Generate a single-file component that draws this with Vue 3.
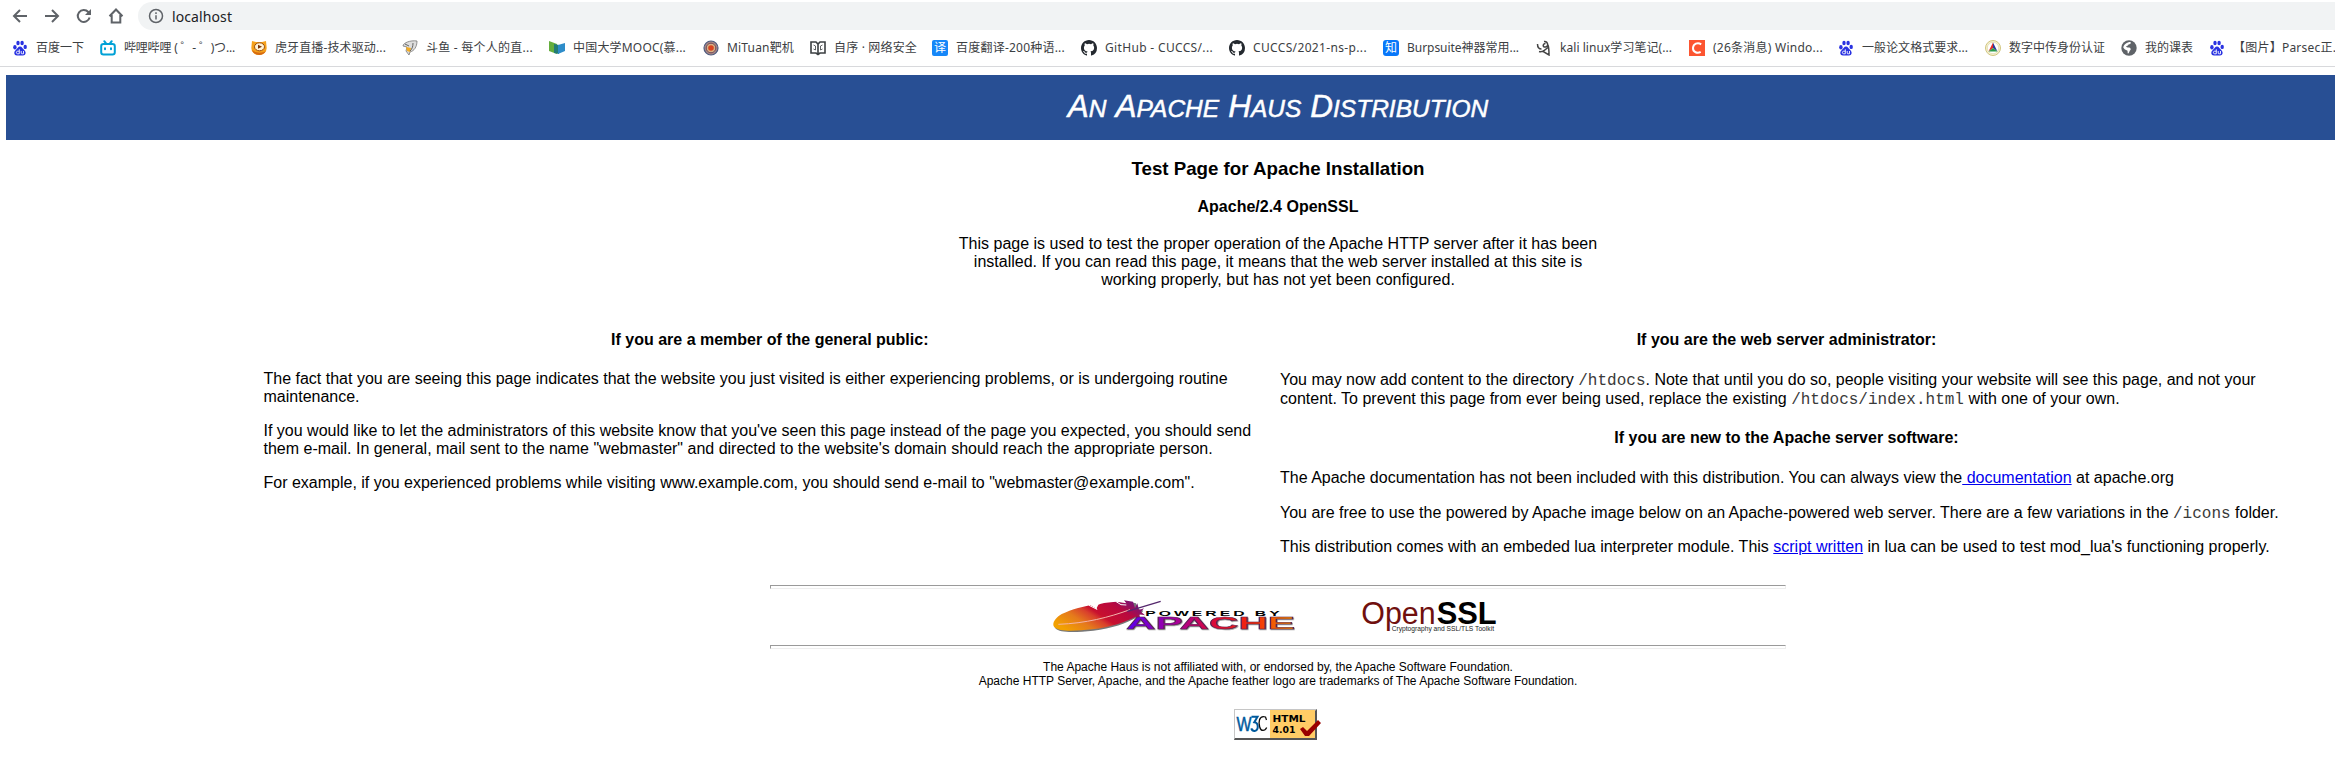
<script setup>
import { onMounted, ref } from 'vue'

const bookmarks = [
  { icon: 'baidu', text: '百度一下', cell: 88, width: 48 },
  { icon: 'bili', text: '哔哩哔哩 ( ゜- ゜)つ...', cell: 151, width: 111 },
  { icon: 'huya', text: '虎牙直播-技术驱动...', cell: 151, width: 111 },
  { icon: 'douyu', text: '斗鱼 - 每个人的直...', cell: 147, width: 107 },
  { icon: 'mooc', text: '中国大学MOOC(慕...', cell: 154, width: 113 },
  { icon: 'mituan', text: 'MiTuan靶机', cell: 107, width: 67 },
  { icon: 'book', text: '自序 · 网络安全', cell: 122, width: 83 },
  { icon: 'yi', text: '百度翻译-200种语...', cell: 149, width: 109 },
  { icon: 'github', text: 'GitHub - CUCCS/...', cell: 148, width: 108 },
  { icon: 'github', text: 'CUCCS/2021-ns-p...', cell: 154, width: 114 },
  { icon: 'zhi', text: 'Burpsuite神器常用...', cell: 153, width: 112 },
  { icon: 'kali', text: 'kali linux学习笔记(...', cell: 153, width: 112 },
  { icon: 'csdn', text: '(26条消息) Windo...', cell: 149, width: 110 },
  { icon: 'baidu', text: '一般论文格式要求...', cell: 147, width: 106 },
  { icon: 'auth', text: '数字中传身份认证', cell: 136, width: 96 },
  { icon: 'globe', text: '我的课表', cell: 88, width: 48 },
  { icon: 'baidu', text: '【图片】Parsec正...', cell: 150, width: 110 },
]
const titleWords = ['An', 'Apache', 'Haus', 'Distribution']

// Letter spacing that brings every label to its width
const labels = ref([])
const spacing = ref(bookmarks.map(() => 0))
onMounted(() => {
  spacing.value = labels.value.map((el, i) => {
    const natural = el.getBoundingClientRect().width
    return (bookmarks[i].width - natural) / [...bookmarks[i].text].length
  })
})
</script>

<template>
  <div class="window">
    <header class="chrome">
      <div class="toolbar">
        <svg class="nav" viewBox="0 0 16 16"><path d="M15 8H2M8 2L2 8l6 6" /></svg>
        <svg class="nav" viewBox="0 0 16 16"><path d="M1 8h13M8 2l6 6-6 6" /></svg>
        <svg class="nav" viewBox="0 0 16 16"><path d="M13.6 9.5A6 6 0 1 1 12.3 4L14 6" /><path class="solid" d="M15 1v6H9z" /></svg>
        <svg class="nav" viewBox="0 0 16 16"><path d="M1.5 8.3L8 1.5l6.500 6.800M3.700 7v7.500h8.600V7" /></svg>
        <div class="address">
          <svg class="info" viewBox="0 0 16 16"><circle cx="8" cy="8" r="6.500" /><path d="M8 7.200v4.300M8 4.300v1.700" /></svg>
          <span>localhost</span>
        </div>
      </div>
      <nav class="bookmarks">
        <a v-for="(b, i) in bookmarks" :key="i" class="bookmark" :style="{ width: b.cell + 'px' }">
          <svg class="favicon" viewBox="0 0 16 16">
            <g v-if="b.icon === 'baidu'" fill="#2932e1">
              <ellipse cx="2.900" cy="7.300" rx="1.700" ry="2.200" />
              <ellipse cx="6" cy="3" rx="1.700" ry="2.300" />
              <ellipse cx="10.100" cy="3" rx="1.700" ry="2.300" />
              <ellipse cx="13.200" cy="6.900" rx="1.700" ry="2.200" />
              <path d="M8 6.500c2 0 2.500 2 4 3.300 2.800 2.500 1.700 5.700-1 5.700H5c-3 0-3.700-3.400-1-5.700C5.500 8.500 6 6.500 8 6.500z" />
              <path d="M7.300 9.300v4.500H5.600c-1.600 0-1.600-2.600 0-2.600h1.700M9.200 11v2.100c0 .700.400.700 1 .700h1.300V11" fill="none" stroke="#fff" stroke-width=".9" />
            </g>
            <g v-else-if="b.icon === 'bili'" fill="none" stroke="#00a1d6" stroke-width="2" stroke-linecap="round">
              <rect x="1.200" y="4" width="13.600" height="10.500" rx="2.300" />
              <path d="M4.300 1.200L6 3.400M11.700 1.200L10 3.400M5 8.300v1M11 8.300v1" />
            </g>
            <g v-else-if="b.icon === 'huya'">
              <path d="M1 1l4 1h6l4-1 .7 7a7.600 7 0 0 1-15.400 0z" fill="#f5a11b" />
              <path d="M1 10c2 6 11 7 14 1-3 2-9 3-14-1z" fill="#d66a12" />
              <ellipse cx="8.500" cy="6.800" rx="5" ry="4" fill="#fff3d5" stroke="#9c4c08" />
              <path d="M7 4.800l4 2-4 2z" fill="#7b3204" />
            </g>
            <g v-else-if="b.icon === 'douyu'">
              <path d="M15 1C8 0 1 3 1 6l4 1-1 4 3 4 1-3c4-1 7-5 7-11z" fill="#ddd" stroke="#777" stroke-width=".8" />
              <path d="M4 7l5 1-1 4-3-1z" fill="#f4ad23" />
              <path d="M3 4l4 2M11 3c0 4-1 6-3 8" fill="none" stroke="#444" stroke-width=".8" />
            </g>
            <g v-else-if="b.icon === 'mooc'">
              <path d="M0 1l8 3v10l-8-3z" fill="#65ae3d" />
              <path d="M5 4l5 1v9l-5-1z" fill="#237c76" />
              <path d="M9 5l7-2v8l-7 3z" fill="#2d8cc9" />
            </g>
            <g v-else-if="b.icon === 'mituan'">
              <circle cx="8" cy="8" r="7" fill="#a88986" stroke="#4e5b7f" stroke-width="1.200" />
              <circle cx="8" cy="8" r="4.800" fill="#d7b183" stroke="#734a5c" />
              <circle cx="8" cy="8" r="2.800" fill="#d94420" />
            </g>
            <g v-else-if="b.icon === 'book'" fill="none" stroke="#3c4043" stroke-width="1.600">
              <path d="M1 2h5l2 2 2-2h5v11h-5l-2 1.500L6 13H1zM8 4v10" />
              <path d="M3.500 5l2 1v4M12.500 5l-2 1v4M3.500 9l2 1M12.500 9l-2 1" stroke-width=".8" />
            </g>
            <g v-else-if="b.icon === 'yi'">
              <rect width="16" height="16" rx="2" fill="#1687f8" />
              <text x="8" y="12.300" class="glyph">译</text>
            </g>
            <path v-else-if="b.icon === 'github'" fill="#24292f" d="M8 0C3.580 0 0 3.580 0 8c0 3.540 2.290 6.530 5.470 7.590.4.070.55-.17.55-.38 0-.19-.01-.82-.01-1.490-2.010.37-2.530-.49-2.690-.94-.09-.23-.48-.94-.82-1.130-.28-.15-.68-.52-.01-.53.63-.01 1.080.58 1.230.82.72 1.210 1.870.87 2.330.66.07-.52.28-.87.51-1.070-1.780-.2-3.640-.89-3.640-3.950 0-.87.31-1.590.82-2.150-.08-.2-.36-1.020.08-2.120 0 0 .67-.21 2.200.82a7.600 7.600 0 0 1 4 0c1.530-1.040 2.200-.82 2.200-.82.44 1.100.16 1.920.08 2.120.51.56.82 1.270.82 2.150 0 3.070-1.870 3.750-3.650 3.950.29.25.54.73.54 1.480 0 1.070-.01 1.930-.01 2.200 0 .21.15.46.55.38A8.010 8.010 0 0 0 16 8c0-4.420-3.580-8-8-8z" />
            <g v-else-if="b.icon === 'zhi'">
              <rect width="16" height="16" rx="3" fill="#0877f9" />
              <text x="8" y="12.300" class="glyph">知</text>
            </g>
            <g v-else-if="b.icon === 'kali'" fill="none" stroke="#444" stroke-width="1.500">
              <path d="M1.500 4c0 3 1.500 5 4 5M8 1.500c4-.5 5 5 1.500 5.500S7 3.500 9.500 3.500M12 5c1 3 1 6 1 10L7 11.500l5-4M3 11.500c2 .5 3 .5 5-1" />
            </g>
            <g v-else-if="b.icon === 'csdn'">
              <rect width="16" height="16" fill="#fc5531" />
              <path d="M12.200 4.300C8.500 1.800 4.300 4 4 8c-.2 4.300 4.500 5.700 7.700 3.800" fill="none" stroke="#fff" stroke-width="2" />
            </g>
            <g v-else-if="b.icon === 'auth'">
              <circle cx="8" cy="8" r="7.500" fill="#f5f0cf" stroke="#d1c681" />
              <circle cx="8" cy="8" r="5.700" fill="#fff" stroke="#ded8aa" stroke-width=".7" />
              <path d="M8 2.500L3.500 11.500 8 8z" fill="#e22b27" />
              <path d="M8 2.500l4.500 9L8 8z" fill="#283999" />
              <path d="M3.500 11.500h9L8 8z" fill="#2b9b49" />
            </g>
            <g v-else>
              <circle cx="8" cy="8" r="7.700" fill="#5f6368" />
              <path d="M9.500 2c1 1.500-.5 2.300-2 2.500C7 5.500 6 6 5 6.200 5.500 7 6 7.500 8 7.500c1.500 0 2 1.500 1.500 2.500-1 .5-1 2.500-2.500 3.700-.5-1.200-.3-2-.5-3C4.500 10 3 9 2.300 7.500 2.500 4.500 6 2 9.500 2z" fill="#fff" />
            </g>
          </svg>
          <span ref="labels" class="label" :style="{ letterSpacing: spacing[i] + 'px' }">{{ b.text }}</span>
        </a>
      </nav>
    </header>

    <main class="page">
      <h1><span v-for="w in titleWords" :key="w" class="word">{{ w }}</span></h1>
      <section class="intro">
        <h2>Test Page for Apache Installation</h2>
        <h3>Apache/2.4 OpenSSL</h3>
        <p>This page is used to test the proper operation of the Apache HTTP server after it has been installed. If you can read this page, it means that the web server installed at this site is working properly, but has not yet been configured.</p>
      </section>

      <div class="columns">
        <section>
          <h3>If you are a member of the general public:</h3>
          <p>The fact that you are seeing this page indicates that the website you just visited is either experiencing problems, or is undergoing routine maintenance.</p>
          <p>If you would like to let the administrators of this website know that you've seen this page instead of the page you expected, you should send them e-mail. In general, mail sent to the name "webmaster" and directed to the website's domain should reach the appropriate person.</p>
          <p>For example, if you experienced problems while visiting www.example.com, you should send e-mail to "webmaster@example.com".</p>
        </section>
        <section>
          <h3>If you are the web server administrator:</h3>
          <p class="paths">You may now add content to the directory <code>/htdocs</code>. Note that until you do so, people visiting your website will see this page, and not your content. To prevent this page from ever being used, replace the existing <code>/htdocs/index.html</code> with one of your own.</p>
          <h3 class="next">If you are new to the Apache server software:</h3>
          <p>The Apache documentation has not been included with this distribution. You can always view the<a href="#">&nbsp;documentation</a> at apache.org</p>
          <p class="paths">You are free to use the powered by Apache image below on an Apache-powered web server. There are a few variations in the <code>/icons</code> folder.</p>
          <p>This distribution comes with an embeded lua interpreter module. This <a href="#">script written</a> in lua can be used to test mod_lua's functioning properly.</p>
        </section>
      </div>

      <div class="logos">
        <svg class="apache" viewBox="60 69 750 114">
          <defs>
            <linearGradient id="plume" x1="0" x2="1" y1=".7" y2=".2">
              <stop offset="0" stop-color="#f2a100" /><stop offset=".25" stop-color="#e57a1c" /><stop offset=".42" stop-color="#d9402c" /><stop offset=".5" stop-color="#c8102e" /><stop offset=".75" stop-color="#b8083f" /><stop offset="1" stop-color="#6a1683" />
            </linearGradient>
            <linearGradient id="word" x1="0" x2="1" y1="0" y2="0">
              <stop offset="0" stop-color="#5a00ee" /><stop offset=".3" stop-color="#a8009a" /><stop offset=".5" stop-color="#d8083c" /><stop offset=".75" stop-color="#f52808" /><stop offset="1" stop-color="#ef9300" />
            </linearGradient>
          </defs>
          <path d="M76 161C90 176 140 173 190 168 245 162 290 145 325 126L340 108 325 102 318 86 285 79 292 88 262 83C240 86 222 85 208 92L202 104 184 94C155 99 112 111 89 126 75 137 69 151 76 161z" fill="#777" transform="translate(3 2)" />
          <path d="M76 159C90 174 140 171 190 166 245 160 290 143 320 128L337 140 330 121 348 124 336 113 345 103 330 108 325 88 318 102 312 83 285 79 292 88 262 83C240 86 222 85 208 92L202 104 184 94C155 99 112 111 89 126 75 137 69 151 76 159z" fill="url(#plume)" />
          <path d="M88 151C170 148 240 130 303 107" fill="none" stroke="#f4b4aa" stroke-width="3" />
          <path d="M295 112L395 82" stroke="#54276c" stroke-width="4" />
          <path d="M180 94L204 106 190 91M260 82L276 92 292 93" fill="none" stroke="#fff" stroke-width="3" />
          <text x="349" y="126" font-size="21" textLength="412" lengthAdjust="spacingAndGlyphs" class="powered">POWERED BY</text>
          <text x="291" y="166" font-size="47" textLength="507" lengthAdjust="spacingAndGlyphs" class="apache-word" fill="url(#word)">APACHE</text>
        </svg>
        <svg class="openssl" viewBox="990 69 420 114">
          <text x="997" y="150" font-size="93" textLength="223" lengthAdjust="spacingAndGlyphs" fill="#70100f">Open</text>
          <text x="1223" y="150" font-size="93" font-weight="bold" textLength="180" lengthAdjust="spacingAndGlyphs">SSL</text>
          <rect x="1087" y="153" width="310" height="20" fill="#fff" />
          <text x="1088" y="170" font-size="21" textLength="307" lengthAdjust="spacingAndGlyphs" fill="#222">Cryptography and SSL/TLS Toolkit</text>
        </svg>
      </div>

      <footer>
        <p>The Apache Haus is not affiliated with, or endorsed by, the Apache Software Foundation.<br />Apache HTTP Server, Apache, and the Apache feather logo are trademarks of The Apache Software Foundation.</p>
        <svg class="badge" viewBox="0 0 88 31">
          <rect width="83" height="31" fill="#555" />
          <path d="M0 0h83l-2 2H1v27l-1 2z" fill="#c6c6c6" />
          <rect x="1" y="1" width="35" height="28" fill="#fff" />
          <rect x="36" y="1" width="45" height="28" fill="#fc6" />
          <text x="2.500" y="22" font-size="20" textLength="15" lengthAdjust="spacingAndGlyphs" fill="#005a9c" stroke="#005a9c" stroke-width=".5">W</text>
          <path d="M17.500 7.700h6l-3.200 5.500c5 .5 4.200 9.200 0 8.700-1.600 0-2.500-1-3-2.500" fill="none" stroke="#005a9c" stroke-width="2" />
          <path d="M32.500 11l-1-3c-7-2-7 6-5.800 10 1.200 4.500 5 4.500 7 .5" fill="none" stroke="#111" stroke-width="1.300" />
          <text x="38.500" y="13" font-size="9.500" textLength="33" lengthAdjust="spacingAndGlyphs" class="level">HTML</text>
          <text x="38.500" y="24" font-size="9.500" textLength="23" lengthAdjust="spacingAndGlyphs" class="level">4.01</text>
          <path d="M66 20l3-2 4 4 11-11 3 3-12 13h-4z" fill="#900" />
        </svg>
      </footer>
    </main>
  </div>
</template>

<style>
body { margin: 0; background: #fff; overflow: hidden; }
</style>

<style scoped>
.window { width: 2335px; height: 760px; overflow: hidden; background: #fff; }
.chrome { box-sizing: border-box; height: 67px; border-bottom: 1px solid #d8d9dc; font-family: "Noto Sans", "Noto Sans CJK SC", sans-serif; }
.toolbar { display: flex; align-items: center; gap: 16px; height: 28px; padding: 2px 0 0 12px; }
.nav { width: 16px; height: 16px; flex: none; fill: none; stroke: #5f6368; stroke-width: 2; }
.nav .solid { fill: #5f6368; stroke: none; }
.address { flex: 1; display: flex; align-items: center; gap: 8px; height: 28px; margin-left: -2px; padding-left: 10px; border-radius: 14px 0 0 14px; background: #f1f3f4; color: #202124; font-size: 14px; letter-spacing: .1px; }
.info { width: 16px; height: 16px; fill: none; stroke: #5f6368; stroke-width: 1.500; }
.bookmarks { display: flex; height: 36px; padding-left: 12px; }
.bookmark { flex: none; display: flex; align-items: center; gap: 8px; color: #3c4043; font-size: 12px; white-space: nowrap; }
.favicon { width: 16px; height: 16px; flex: none; }
.label { flex: none; line-height: 18px; }
.glyph { fill: #fff; font-size: 12px; text-anchor: middle; font-family: "Noto Sans CJK SC", sans-serif; }

.page { width: 2544px; margin: 8px 0 0 6px; font: 16px/18px "Liberation Sans", Arial, sans-serif; color: #000; }
h1 { box-sizing: border-box; display: flex; justify-content: center; gap: 9px; height: 65px; margin: 0; padding-top: 13px; background: #284f94; color: #fff; font-size: 24.500px; line-height: 36px; font-weight: normal; font-style: italic; -webkit-text-stroke: .5px #fff; }
.word { display: block; text-transform: uppercase; }
.word::first-letter { font-size: 31.500px; line-height: 36px; -webkit-text-stroke: 0; }
h2, h3, p { margin: 0; }
h2 { font-size: 18.720px; line-height: 21px; }
h3 { font-size: 16px; text-align: center; }
.intro { width: 646px; height: 173px; margin: 0 auto; padding-top: 18px; text-align: center; }
.intro h3 { margin: 19px 0; }
.columns { display: grid; grid-template-columns: 1012.500px 1013px; gap: 4px; height: 254px; margin-left: 257.500px; }
.columns h3 { margin-bottom: 21px; }
.columns p + p { margin-top: 16px; }
.columns .paths { line-height: 19px; }
.columns .next { margin: 21px 0 22px; }
code { font-family: "Liberation Mono", monospace; font-size: 16px; line-height: 0; color: #3a3a3a; }
.columns a { color: #00e; }
.logos { box-sizing: border-box; display: flex; gap: 60px; width: 1016px; height: 64px; margin: 0 auto; padding: 12px 0 0 279px; position: relative; }
.logos::before, .logos::after { content: ""; box-sizing: border-box; position: absolute; left: 0; width: 1016px; height: 4px; border: 1px solid; border-color: #9a9a9a #eee #eee #9a9a9a; }
.logos::before { top: 0; }
.logos::after { top: 60px; }
.apache { width: 250px; height: 38px; }
.openssl { width: 140px; height: 38px; }
.powered { font-family: "Liberation Sans", sans-serif; font-weight: bold; letter-spacing: 4px; }
.apache-word { font-family: "Liberation Sans", sans-serif; font-weight: bold; stroke: #5a2050; stroke-width: 1.500; filter: drop-shadow(2px 2px 0 #777); }
.level { font-family: "DejaVu Sans", sans-serif; font-weight: bold; }
footer { display: flex; flex-direction: column; align-items: center; padding-top: 11px; text-align: center; font-size: 12px; line-height: 14px; }
.badge { width: 88px; height: 31px; margin-top: 21px; }
</style>
